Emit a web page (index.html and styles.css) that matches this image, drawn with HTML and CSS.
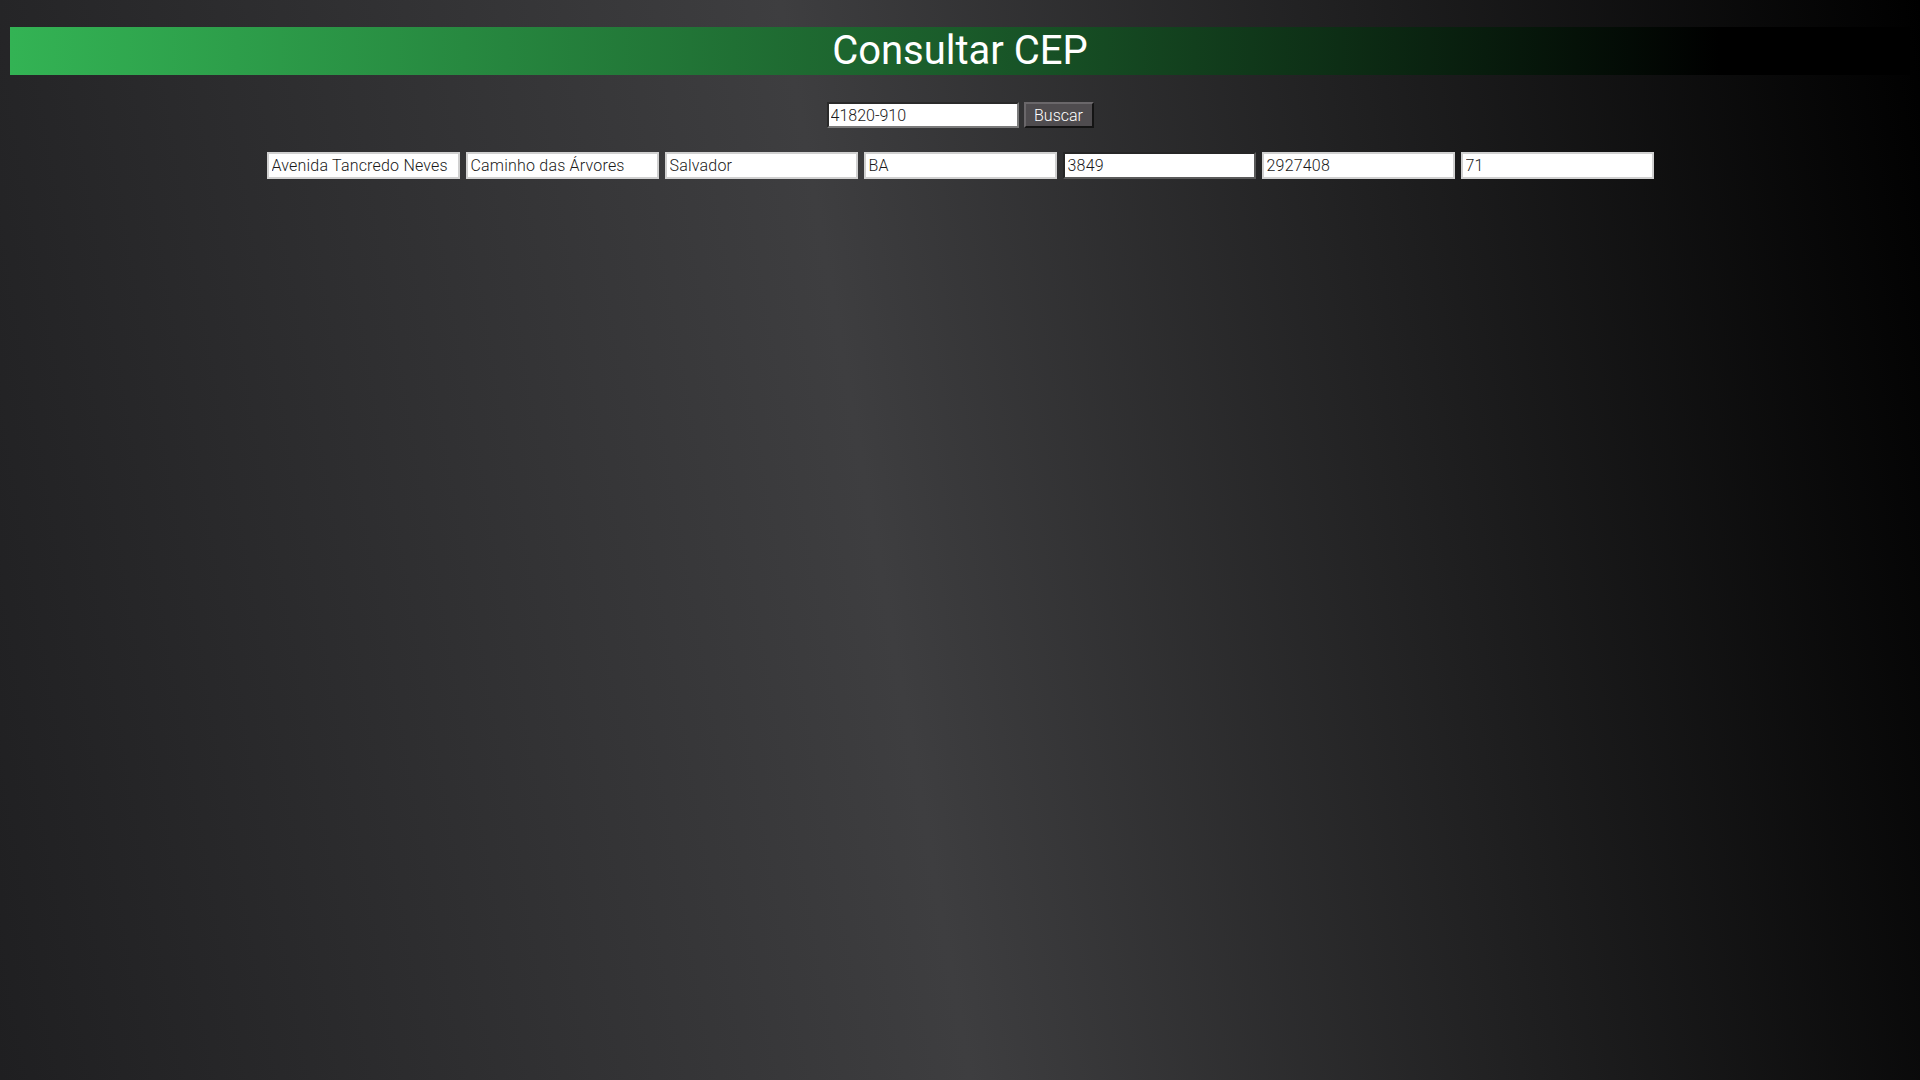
FILE: index.html
```html
<!DOCTYPE html>
<html lang="pt-BR">
<head>
<meta charset="utf-8">
<title>Consultar CEP</title>
<link rel="stylesheet" href="styles.css">
</head>
<body>
<h1 class="title">Consultar CEP</h1>
<div class="search">
  <input class="cep-input" type="text" value="41820-910">
  <button class="btn" type="button">Buscar</button>
</div>
<div class="results">
  <input class="field" type="text" value="Avenida Tancredo Neves">
  <input class="field" type="text" value="Caminho das Árvores">
  <input class="field" type="text" value="Salvador">
  <input class="field" type="text" value="BA">
  <input class="field field-dark" type="text" value="3849">
  <input class="field" type="text" value="2927408">
  <input class="field" type="text" value="71">
</div>
</body>
</html>
```
FILE: styles.css
```css
html {
  min-height: 100%;
  background: linear-gradient(80deg, #1f1f21 0%, #3e3e40 46%, #000000 100%);
}
body {
  margin: 0 10px;
  padding-top: 27px;
  min-height: 100vh;
  box-sizing: border-box;
  font-family: Roboto, "Liberation Sans", sans-serif;
}
.title {
  margin: 0;
  height: 48px;
  line-height: 48px;
  font-size: 40px;
  font-weight: 400;
  text-align: center;
  color: #ffffff;
  background: linear-gradient(to right, #33b354 0%, #1a5b2a 50%, #000000 90%);
}
.search {
  display: flex;
  justify-content: center;
  gap: 5px;
  margin-top: 27px;
}
.cep-input {
  width: 192px;
  height: 26px;
  box-sizing: border-box;
  padding: 0 2px;
  border: 2px solid;
  border-color: #2a2a2a #7a7a7a #7a7a7a #2a2a2a;
  background: #fff;
  font-family: Roboto, "Liberation Sans", sans-serif;
  font-size: 16px;
  font-weight: 300;
  color: #1a1a1a;
  outline: none;
}
.btn {
  width: 70px;
  height: 26px;
  box-sizing: border-box;
  padding: 0;
  border: 2px solid;
  border-color: #6a676a #141414 #141414 #6a676a;
  background: #4f4c4f;
  color: #ffffff;
  font-family: Roboto, "Liberation Sans", sans-serif;
  font-size: 16px;
  font-weight: 300;
}
.results {
  display: flex;
  justify-content: center;
  gap: 6px;
  margin-top: 24px;
}
.field {
  width: 193px;
  height: 27px;
  box-sizing: border-box;
  padding: 0 3px;
  border: 2px solid #d0d0d0;
  background: #fff;
  font-family: Roboto, "Liberation Sans", sans-serif;
  font-size: 16px;
  font-weight: 300;
  letter-spacing: 0.2px;
  color: #1a1a1a;
  outline: none;
}
.field-dark {
  border-color: #262626 #5a5a5a #5a5a5a #262626;
}
```
